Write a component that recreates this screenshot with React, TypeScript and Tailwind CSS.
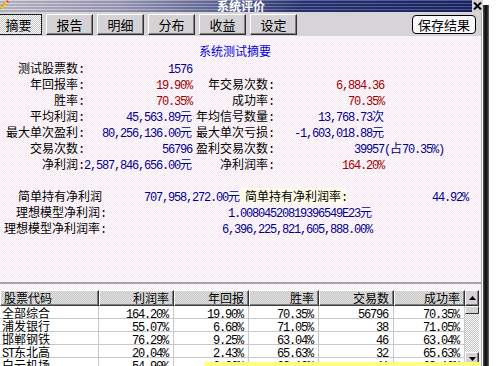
import React from "react";

const T = ({ s }: { s: string }) => (
  <>
    {(s.match(/[\x00-\x7f]+|[^\x00-\x7f]+/g) || []).map((p, i) =>
      /^[\x00-\x7f]/.test(p) ? (
        <span key={i} className="font-['Liberation_Mono',monospace] tracking-[-1.2px]">
          {p}
        </span>
      ) : (
        <span key={i}>{p}</span>
      )
    )}
  </>
);

const B = "text-[#00008c]";
const R = "text-[#a00000]";

type RowP = { l1: string; v1: string; c1: string; l2?: string; v2?: string; c2?: string; extra?: string };

const SumRow = ({ l1, v1, c1, l2, v2, c2, extra }: RowP) => (
  <div className="flex h-[16px] leading-[16px] whitespace-nowrap">
    <div className="w-[84px] text-right text-black">
      <T s={l1} />
    </div>
    <div className={"w-[108px] text-right " + c1}>
      <T s={v1} />
    </div>
    <div className="w-[82px] text-right text-black">{l2 ? <T s={l2} /> : null}</div>
    <div className={"w-[110px] text-right " + (c2 || "")}>{v2 ? <T s={v2} /> : null}</div>
    {extra ? (
      <div className={B}>
        <T s={extra} />
      </div>
    ) : null}
  </div>
);

const Btn = ({ label, active }: { label: string; active?: boolean }) =>
  active ? (
    <div className="w-[47px] h-[21px] flex items-center justify-center border border-[#202020] [background-image:repeating-conic-gradient(#ffffff_0_25%,#c4c4c4_0_50%)] [background-size:2px_2px] text-black text-[13px] leading-[13px]">
      {label}
    </div>
  ) : (
    <div className="w-[47px] h-[21px] flex items-center justify-center border border-t-white border-l-white border-r-[#303030] border-b-[#303030] shadow-[inset_-1px_-1px_0_#808080] bg-[#d4d2d4] text-black text-[13px] leading-[13px]">
      {label}
    </div>
  );

const headers = ["股票代码", "利润率", "年回报", "胜率", "交易数", "成功率"];
const widths = ["w-[99px]", "w-[75px]", "w-[75px]", "w-[70px]", "w-[75px]", "w-[71px]"];
const rows = [
  ["全部综合", "164.20%", "19.90%", "70.35%", "56796", "70.35%"],
  ["浦发银行", "55.07%", "6.68%", "71.05%", "38", "71.05%"],
  ["邯郸钢铁", "76.29%", "9.25%", "63.04%", "46", "63.04%"],
  ["ST东北高", "20.04%", "2.43%", "65.63%", "32", "65.63%"],
  ["白云机场", "54.90%", "6.66%", "68.12%", "41", "68.12%"],
];

const ArrowBtn = ({ up, h }: { up?: boolean; h: string }) => (
  <div
    className={
      "w-[14px] flex items-center justify-center border border-t-white border-l-white border-r-[#303030] border-b-[#303030] shadow-[inset_-1px_-1px_0_#808080] bg-[#d4d2d4] " +
      h
    }
  >
    <svg width="7" height="4" viewBox="0 0 7 4">
      {up ? <polygon points="3.5,0 7,4 0,4" fill="#000" /> : <polygon points="0,0 7,0 3.5,4" fill="#000" />}
    </svg>
  </div>
);

export default function App() {
  return (
    <div className="w-[496px] h-[366px] overflow-hidden flex bg-white font-['Noto_Sans_CJK_SC',sans-serif] text-[12px] relative">
      <div className="w-[483px] flex flex-col shrink-0">
        {/* title bar */}
        <div className="h-[13px] flex items-stretch [background-image:repeating-linear-gradient(180deg,rgba(255,255,255,0.22)_0px,rgba(255,255,255,0.22)_1px,rgba(0,0,40,0.14)_1px,rgba(0,0,40,0.14)_3px),linear-gradient(90deg,#cecbd6_0%,#a9a8c4_25%,#6c74a0_45%,#2c3a7a_62%,#1a2868_100%)]">
          <div className="w-[10px] flex items-start">
            <svg width="9" height="10" viewBox="0 0 9 10">
              <polygon points="0,7 6,1 8,3 2,9 0,9" fill="#f0d020" />
              <polygon points="6,1 7,0 9,2 8,3" fill="#e04040" />
              <polygon points="0,7 2,9 0,9" fill="#30c0d0" />
              <polygon points="1,6 4,3 5,4 2,7" fill="#f08040" />
            </svg>
          </div>
          <div className="flex-1 flex items-center justify-center text-white font-bold text-[12px] leading-[12px]">
            系统评价
          </div>
          <div className="w-[11px] h-[12px] bg-[#d4d2d4] flex items-center justify-center">
            <svg width="9" height="8" viewBox="0 0 9 8">
              <path d="M1 0.5 L8 7.5 M8 0.5 L1 7.5" stroke="#000" strokeWidth="2" />
            </svg>
          </div>
        </div>
        {/* body */}
        <div className="w-[482px] flex-1 flex flex-col border-r border-[#a8a8a8]">
          {/* toolbar */}
          <div className="h-[24px] bg-[#d6d4d6] flex items-start pt-[2px]">
            <div className="flex gap-[4px] ml-[-5px]">
              <Btn label="摘要" active />
              <Btn label="报告" />
              <Btn label="明细" />
              <Btn label="分布" />
              <Btn label="收益" />
              <Btn label="设定" />
            </div>
            <div className="ml-auto mr-[5px] mt-[1px] w-[64px] h-[19px] rounded-[4px] border border-black bg-[#fbfbfb] flex items-center justify-center text-black text-[13px] leading-[13px]">
              保存结果
            </div>
          </div>
          {/* summary panel */}
          <div className="h-[248px] pt-[7px] border-b-2 border-[#a4a4a4] [background-image:repeating-conic-gradient(#f7e6f1_0_25%,#ffffff_0_50%)] [background-size:2px_2px]">
            <div className="h-[16px] leading-[16px] pl-[199px] text-[#0000e0]">系统测试摘要</div>
            <div className="mt-[1px]">
              <SumRow l1="测试股票数:" v1="1576" c1={B} />
              <SumRow l1="年回报率:" v1="19.90%" c1={R} l2="年交易次数:" v2="6,884.36" c2={R} />
              <SumRow l1="胜率:" v1="70.35%" c1={R} l2="成功率:" v2="70.35%" c2={R} />
              <SumRow l1="平均利润:" v1="45,563.89元" c1={B} l2="年均信号数量:" v2="13,768.73次" c2={B} />
              <SumRow l1="最大单次盈利:" v1="80,256,136.00元" c1={B} l2="最大单次亏损:" v2="-1,603,018.88元" c2={B} />
              <SumRow l1="交易次数:" v1="56796" c1={B} l2="盈利交易次数:" v2="39957" c2={B} extra="(占70.35%)" />
              <SumRow l1="净利润:" v1="2,587,846,656.00元" c1={B} l2="净利润率:" v2="164.20%" c2={R} />
            </div>
            <div className="mt-[16px]">
              <div className="flex h-[16px] leading-[16px] whitespace-nowrap">
                <div className="w-[106px] pl-[18px] overflow-hidden text-black">简单持有净利润</div>
                <div className={"w-[134px] text-right " + B}>
                  <T s="707,958,272.00元" />
                </div>
                <div className="w-[107px] pl-[5px] text-black bg-[#fffce8]">
                  <T s="简单持有净利润率:" />
                </div>
                <div className={"w-[121px] text-right " + B}>
                  <T s="44.92%" />
                </div>
              </div>
              <div className="flex h-[16px] leading-[16px] whitespace-nowrap">
                <div className="w-[106px] text-right text-black">
                  <T s="理想模型净利润:" />
                </div>
                <div className={"w-[266px] text-right " + B}>
                  <T s="1.00804520819396549E23元" />
                </div>
              </div>
              <div className="flex h-[16px] leading-[16px] whitespace-nowrap">
                <div className="w-[106px] text-right text-black">
                  <T s="理想模型净利润率:" />
                </div>
                <div className={"w-[266px] text-right " + B}>
                  <T s="6,396,225,821,605,888.00%" />
                </div>
              </div>
            </div>
          </div>
          {/* table */}
          <div className="flex-1 pt-[6px] [background-image:repeating-conic-gradient(#f7e6f1_0_25%,#ffffff_0_50%)] [background-size:2px_2px]">
            <div className="flex h-[76px]">
              <div className="w-[465px] flex flex-col">
                <div className="flex h-[16px]">
                  {headers.map((h, i) => (
                    <div
                      key={i}
                      className={
                        widths[i] +
                        " h-[16px] leading-[14px] border border-t-white border-l-white border-r-[#303030] border-b-[#404040] shadow-[inset_-1px_-1px_0_#808080] [background-image:repeating-conic-gradient(#e0e0e0_0_25%,#c8c8c8_0_50%)] [background-size:2px_2px] text-black whitespace-nowrap " +
                        (i === 0 ? "pl-[3px] text-left" : "pr-[4px] text-right")
                      }
                    >
                      {h}
                    </div>
                  ))}
                </div>
                {rows.map((r, ri) => (
                  <div key={ri} className="flex h-[13px] bg-white border-b border-[#c8c8c8]">
                    {r.map((c, ci) => (
                      <div
                        key={ci}
                        className={
                          widths[ci] +
                          " h-[12px] leading-[13px] border-r border-[#c8c8c8] text-black whitespace-nowrap " +
                          (ci === 0 ? "pl-[2px] text-left" : "pr-[5px] text-right")
                        }
                      >
                        <T s={c} />
                      </div>
                    ))}
                  </div>
                ))}
              </div>
              <div className="w-[14px] flex flex-col">
                <ArrowBtn up h="h-[16px]" />
                <div className="h-[8px] w-[14px] border border-t-white border-l-white border-r-[#303030] border-b-[#303030] bg-[#d4d2d4]" />
                <div className="flex-1 [background-image:repeating-conic-gradient(#ffffff_0_25%,#c0c0c0_0_50%)] [background-size:2px_2px]" />
                <ArrowBtn h="h-[14px]" />
              </div>
            </div>
          </div>
        </div>
      </div>
      <div className="w-[6px] mt-[5px] shrink-0 bg-[linear-gradient(90deg,#505050,#101010_40%,#202020_70%,#707070)]" />
      <div className="flex-1 bg-white" />
      <div className="absolute left-[204px] top-[362px] w-[276px] h-[12px] bg-[#ffff80]" />
    </div>
  );
}
